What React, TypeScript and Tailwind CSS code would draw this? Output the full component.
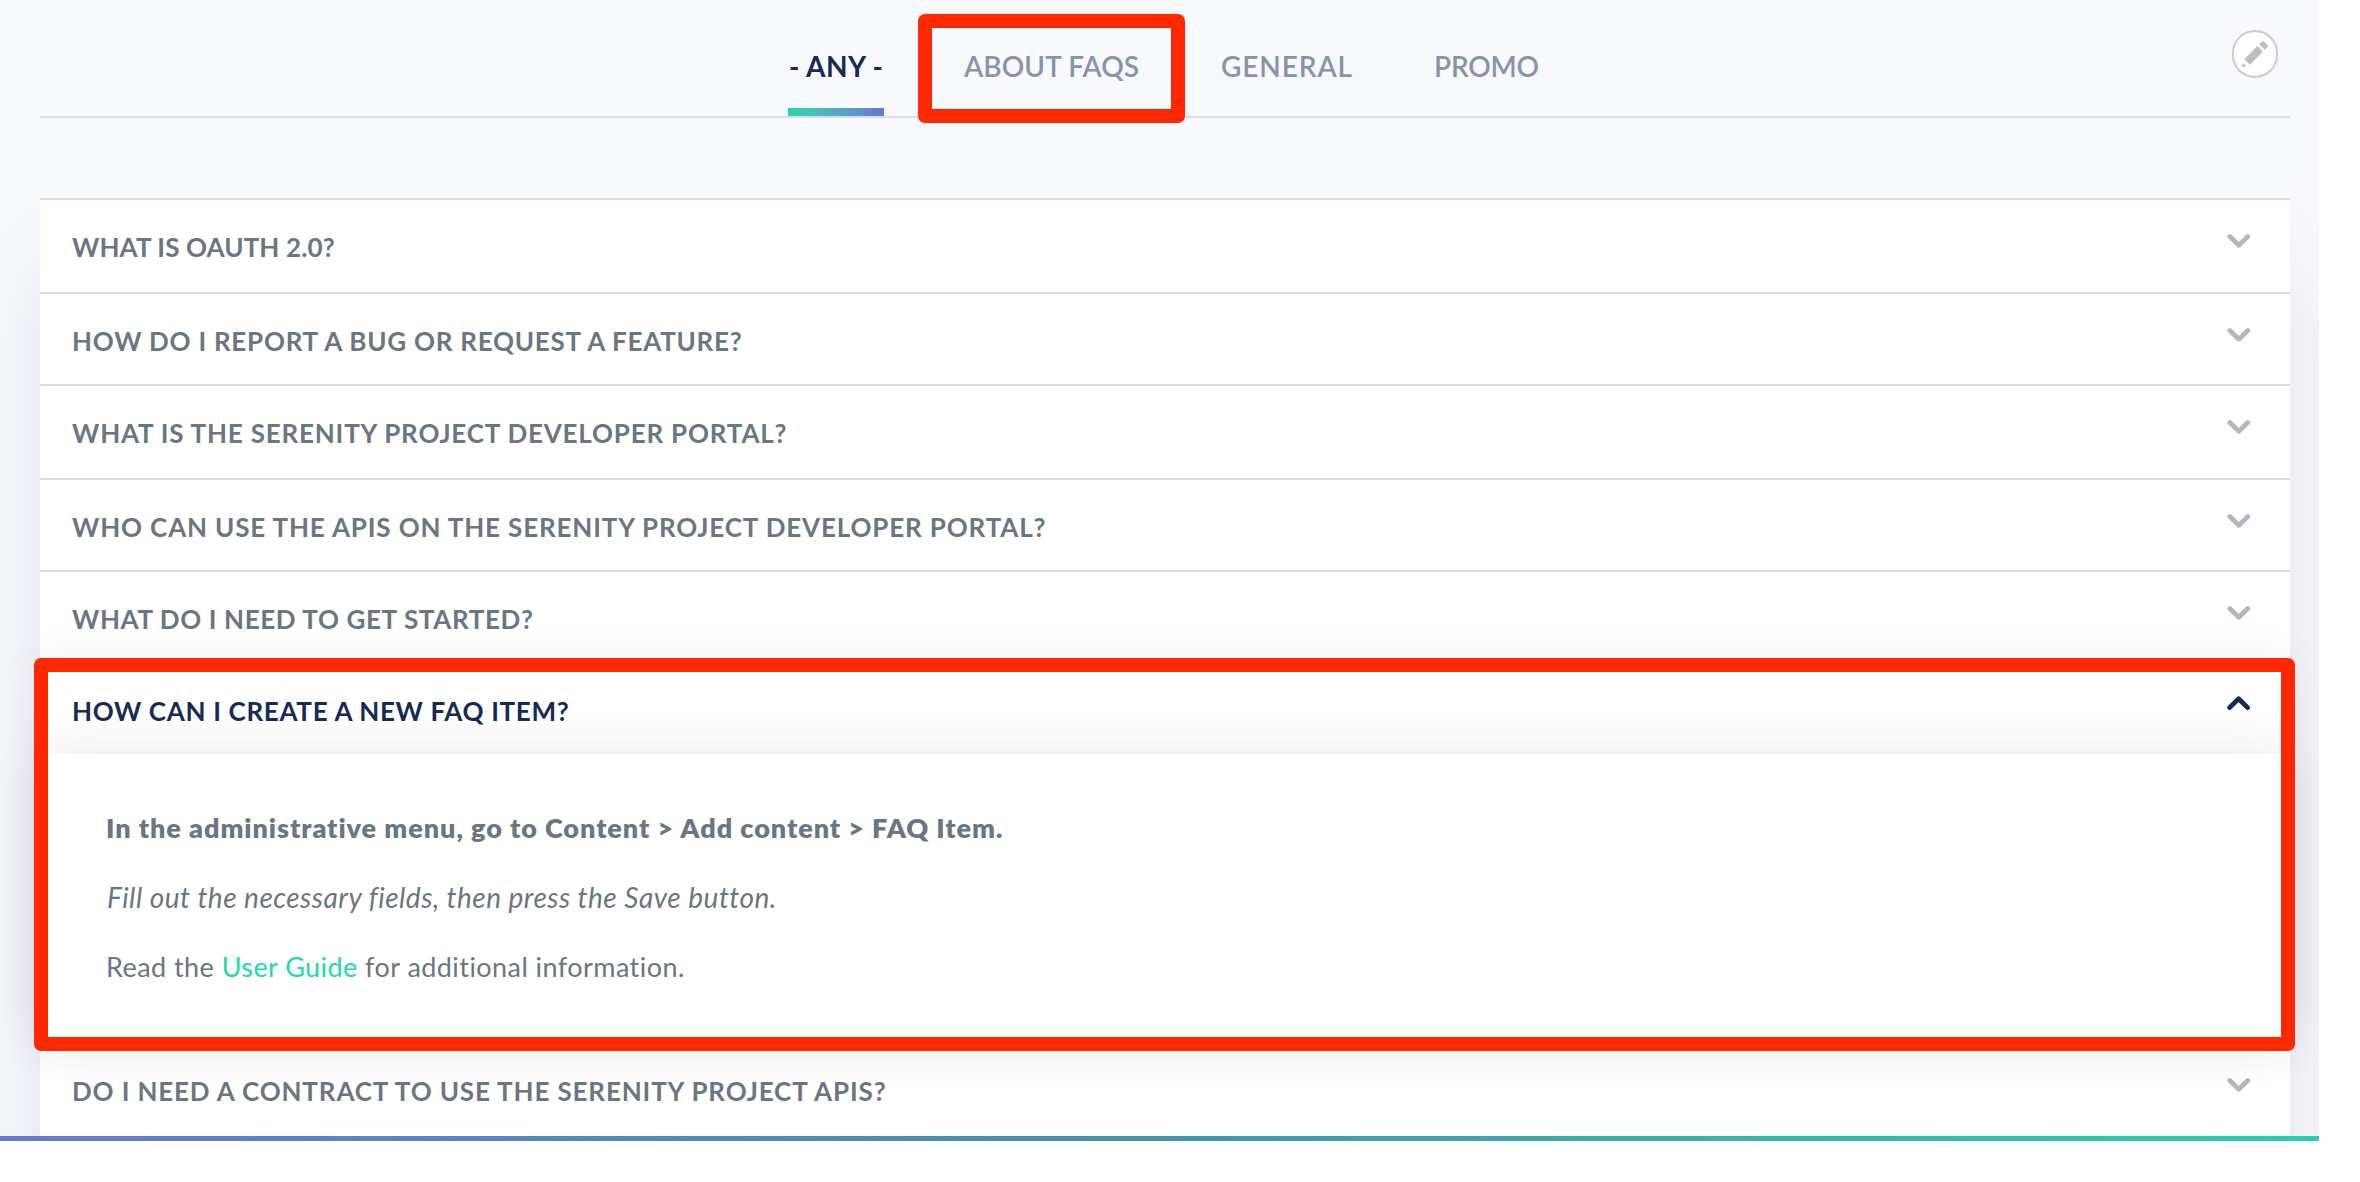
type Faq = { title: string; tracking: string; height: string };

const before: Faq[] = [
  { title: "WHAT IS OAUTH 2.0?", tracking: "tracking-[0.12px]", height: "h-[94px]" },
  { title: "HOW DO I REPORT A BUG OR REQUEST A FEATURE?", tracking: "tracking-[0.74px]", height: "h-[92px]" },
  { title: "WHAT IS THE SERENITY PROJECT DEVELOPER PORTAL?", tracking: "tracking-[0.8px]", height: "h-[94px]" },
  {
    title: "WHO CAN USE THE APIS ON THE SERENITY PROJECT DEVELOPER PORTAL?",
    tracking: "tracking-[0.85px]",
    height: "h-[92px]",
  },
  { title: "WHAT DO I NEED TO GET STARTED?", tracking: "tracking-[0.62px]", height: "h-[92px]" },
];

const after: Faq[] = [
  {
    title: "DO I NEED A CONTRACT TO USE THE SERENITY PROJECT APIS?",
    tracking: "tracking-[0.85px]",
    height: "h-[94px]",
  },
];

function Chevron({ up = false }: { up?: boolean }) {
  return (
    <svg
      width="24"
      height="15"
      viewBox="0 0 24 15"
      fill="none"
      strokeWidth="4.8"
      strokeLinecap="round"
      strokeLinejoin="round"
      className={up ? "mt-[34px] mr-[39px] stroke-[#172a54]" : "mt-[34px] mr-[39px] stroke-[#b0b8c2]"}
    >
      <path d={up ? "M2.6 11.6L11.6 2.8L20.6 11.6" : "M2.8 2.6L11.8 11.3L20.8 2.6"} />
    </svg>
  );
}

function Pencil() {
  return (
    <svg width="30" height="30" viewBox="0 0 16 16" fill="#bebebe">
      <path d="M14.545 3.042l-1.586-1.585c-.389-.389-1.025-.389-1.414 0l-1.293 1.293 3 3 1.293-1.293c.389-.389.389-1.026 0-1.415z" />
      <rect
        x="5.129"
        y="3.8"
        width="4.243"
        height="9.899"
        transform="matrix(-.707 -.707 .707 -.707 6.189 20.064)"
      />
      <path d="M.908 14.775c-.087.262.055.397.316.312l2.001-.667-1.65-1.646-.667 2.001z" />
    </svg>
  );
}

function Row({ faq }: { faq: Faq }) {
  return (
    <div className={`flex items-start justify-between border-t-2 border-[#dadde5] ${faq.height}`}>
      <h3 className={`mt-[34px] ml-[32px] text-[26px] leading-none font-bold text-[#6b7682] ${faq.tracking}`}>
        {faq.title}
      </h3>
      <Chevron />
    </div>
  );
}

export default function App() {
  return (
    <div className="relative h-[1182px] w-[2360px] overflow-hidden bg-white font-['Lato',sans-serif]">
      <main className="h-[1136px] w-[2319px] overflow-hidden bg-[#f8f9fd] pr-[29px] pl-[40px]">
        <nav className="relative flex h-[118px] border-b-2 border-[#dadde5] pl-[748px] text-[28px] leading-none font-bold text-[#8893a9]">
          <a className="flex w-[96px] flex-col justify-between pt-[52px] text-[#172a54]">
            <span className="pl-px tracking-[0.4px] whitespace-nowrap">- ANY -</span>
            <span className="h-2 bg-linear-to-r from-[#20d9ab] to-[#6875d5]" />
          </a>
          <a className="ml-[80px] w-[257px] pt-[52px] font-semibold tracking-[0.1px]">ABOUT FAQS</a>
          <a className="w-[213px] pt-[52px] font-semibold tracking-[0.9px]">GENERAL</a>
          <a className="pt-[52px] font-semibold tracking-[-0.2px]">PROMO</a>
          <button className="absolute top-[30px] right-[12px] flex h-[48px] w-[46px] items-center justify-center rounded-full border-2 border-[#cccccc] bg-white">
            <Pencil />
          </button>
        </nav>

        <section className="mt-[80px] h-[1200px] bg-white shadow-[0_70px_80px_rgba(20,25,40,0.09)]">
          {before.map((f) => (
            <Row key={f.title} faq={f} />
          ))}
          <article className="relative h-[380px] bg-white shadow-[0_0_50px_rgba(0,0,0,0.06)]">
            <header className="flex h-[92px] items-start justify-between">
              <h3 className="mt-[36px] ml-[32px] text-[26px] leading-none font-bold tracking-[0.68px] text-[#172a54]">
                HOW CAN I CREATE A NEW FAQ ITEM?
              </h3>
              <Chevron up />
            </header>
            <div className="h-[288px] bg-white pt-[60px] pl-[66px] text-[27px] leading-none text-[#6b7682] shadow-[0_0_50px_rgba(0,0,0,0.09)]">
              <p className="font-extrabold tracking-[0.95px]">
                In the administrative menu, go to Content &gt; Add content &gt; FAQ Item.
              </p>
              <p className="mt-[43px] pl-px text-[28px] leading-[27px] tracking-[0.5px] italic">
                Fill out the necessary fields, then press the Save button.
              </p>
              <p className="mt-[42px] tracking-[0.44px]">
                Read the <a className="text-[#22d9a8]">User Guide</a> for additional information.
              </p>
            </div>
          </article>
          {after.map((f) => (
            <Row key={f.title} faq={f} />
          ))}
        </section>
      </main>
      <div className="h-[5px] w-[2319px] bg-linear-to-r from-[#667ad5] via-[#4295aa] to-[#27cfae]" />

      <div className="absolute top-[14px] left-[918px] h-[109px] w-[267px] rounded-[7px] border-14 border-[#ff2800]" />
      <div className="absolute top-[658px] left-[34px] h-[393px] w-[2261px] rounded-[7px] border-14 border-[#ff2800]" />
    </div>
  );
}
